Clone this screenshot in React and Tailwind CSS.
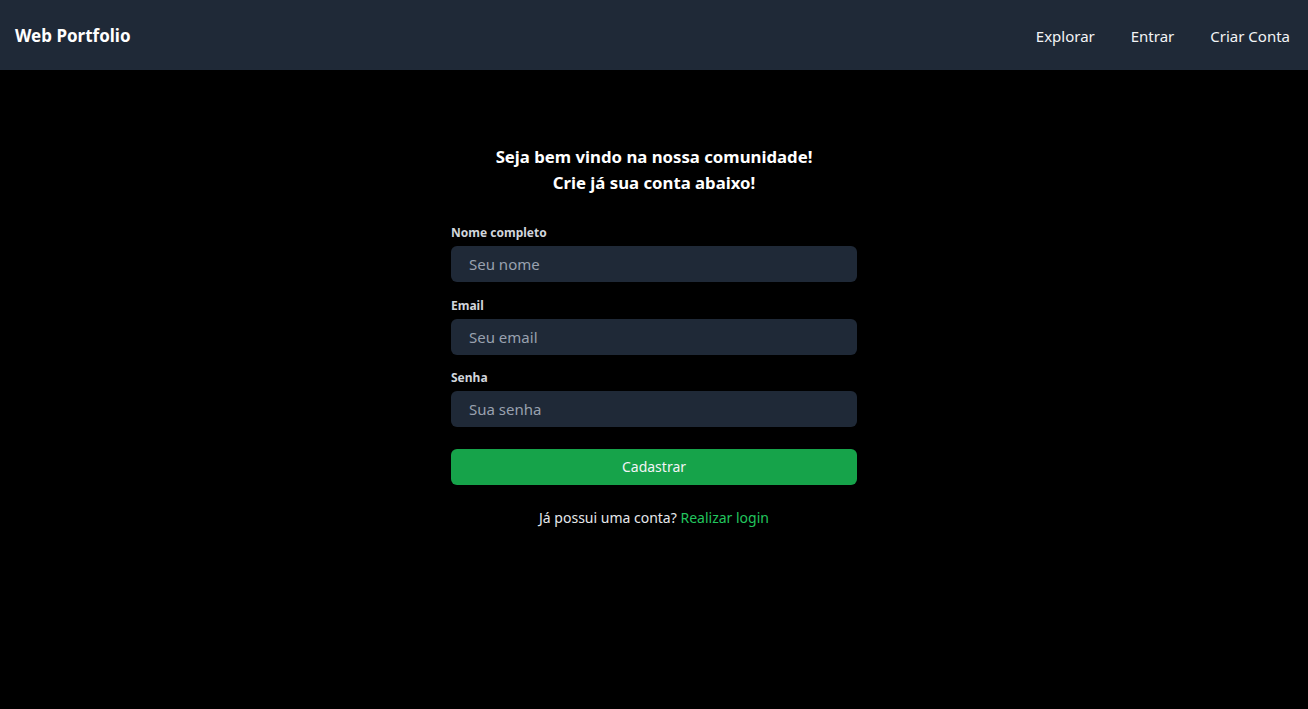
import React from "react";

const Field = ({ label, placeholder, type = "text" }) => (
  <div className="flex flex-col">
    <label className="text-[12px] leading-[16px] font-bold text-gray-300 mb-[5px]">{label}</label>
    <input
      type={type}
      placeholder={placeholder}
      className="h-[36px] w-full rounded-md bg-[#1f2937] px-[18px] text-[15px] text-gray-100 placeholder:text-gray-400 outline-none"
    />
  </div>
);

export default function App() {
  return (
    <div className="min-h-[709px] bg-black text-white" style={{ fontFamily: '"Noto Sans", "Open Sans", sans-serif' }}>
      <header className="h-[70px] bg-[#1f2937] flex items-center justify-between px-[15px] pt-[2px]">
        <a className="text-[17px] font-bold text-white">Web Portfolio</a>
        <nav className="flex items-center gap-[36px] pr-[3px] text-[15px] text-gray-100">
          <a>Explorar</a>
          <a>Entrar</a>
          <a>Criar Conta</a>
        </nav>
      </header>

      <main className="flex justify-center pt-[74px]">
        <div className="w-[406px]">
          <h1 className="text-center text-[16.75px] leading-[26px] font-bold">
            Seja bem vindo na nossa comunidade!
            <br />
            Crie já sua conta abaixo!
          </h1>

          <form className="mt-[29px] flex flex-col gap-[15.5px]" onSubmit={(e) => e.preventDefault()}>
            <Field label="Nome completo" placeholder="Seu nome" />
            <Field label="Email" placeholder="Seu email" type="email" />
            <Field label="Senha" placeholder="Sua senha" type="password" />

            <button
              type="submit"
              className="mt-[6px] h-[36px] w-full rounded-md bg-[#16a34a] text-[14px] text-gray-100"
            >
              Cadastrar
            </button>
          </form>

          <p className="mt-[22px] text-center text-[14px] text-gray-200">
            Já possui uma conta? <a className="text-[#22c55e]">Realizar login</a>
          </p>
        </div>
      </main>
    </div>
  );
}
